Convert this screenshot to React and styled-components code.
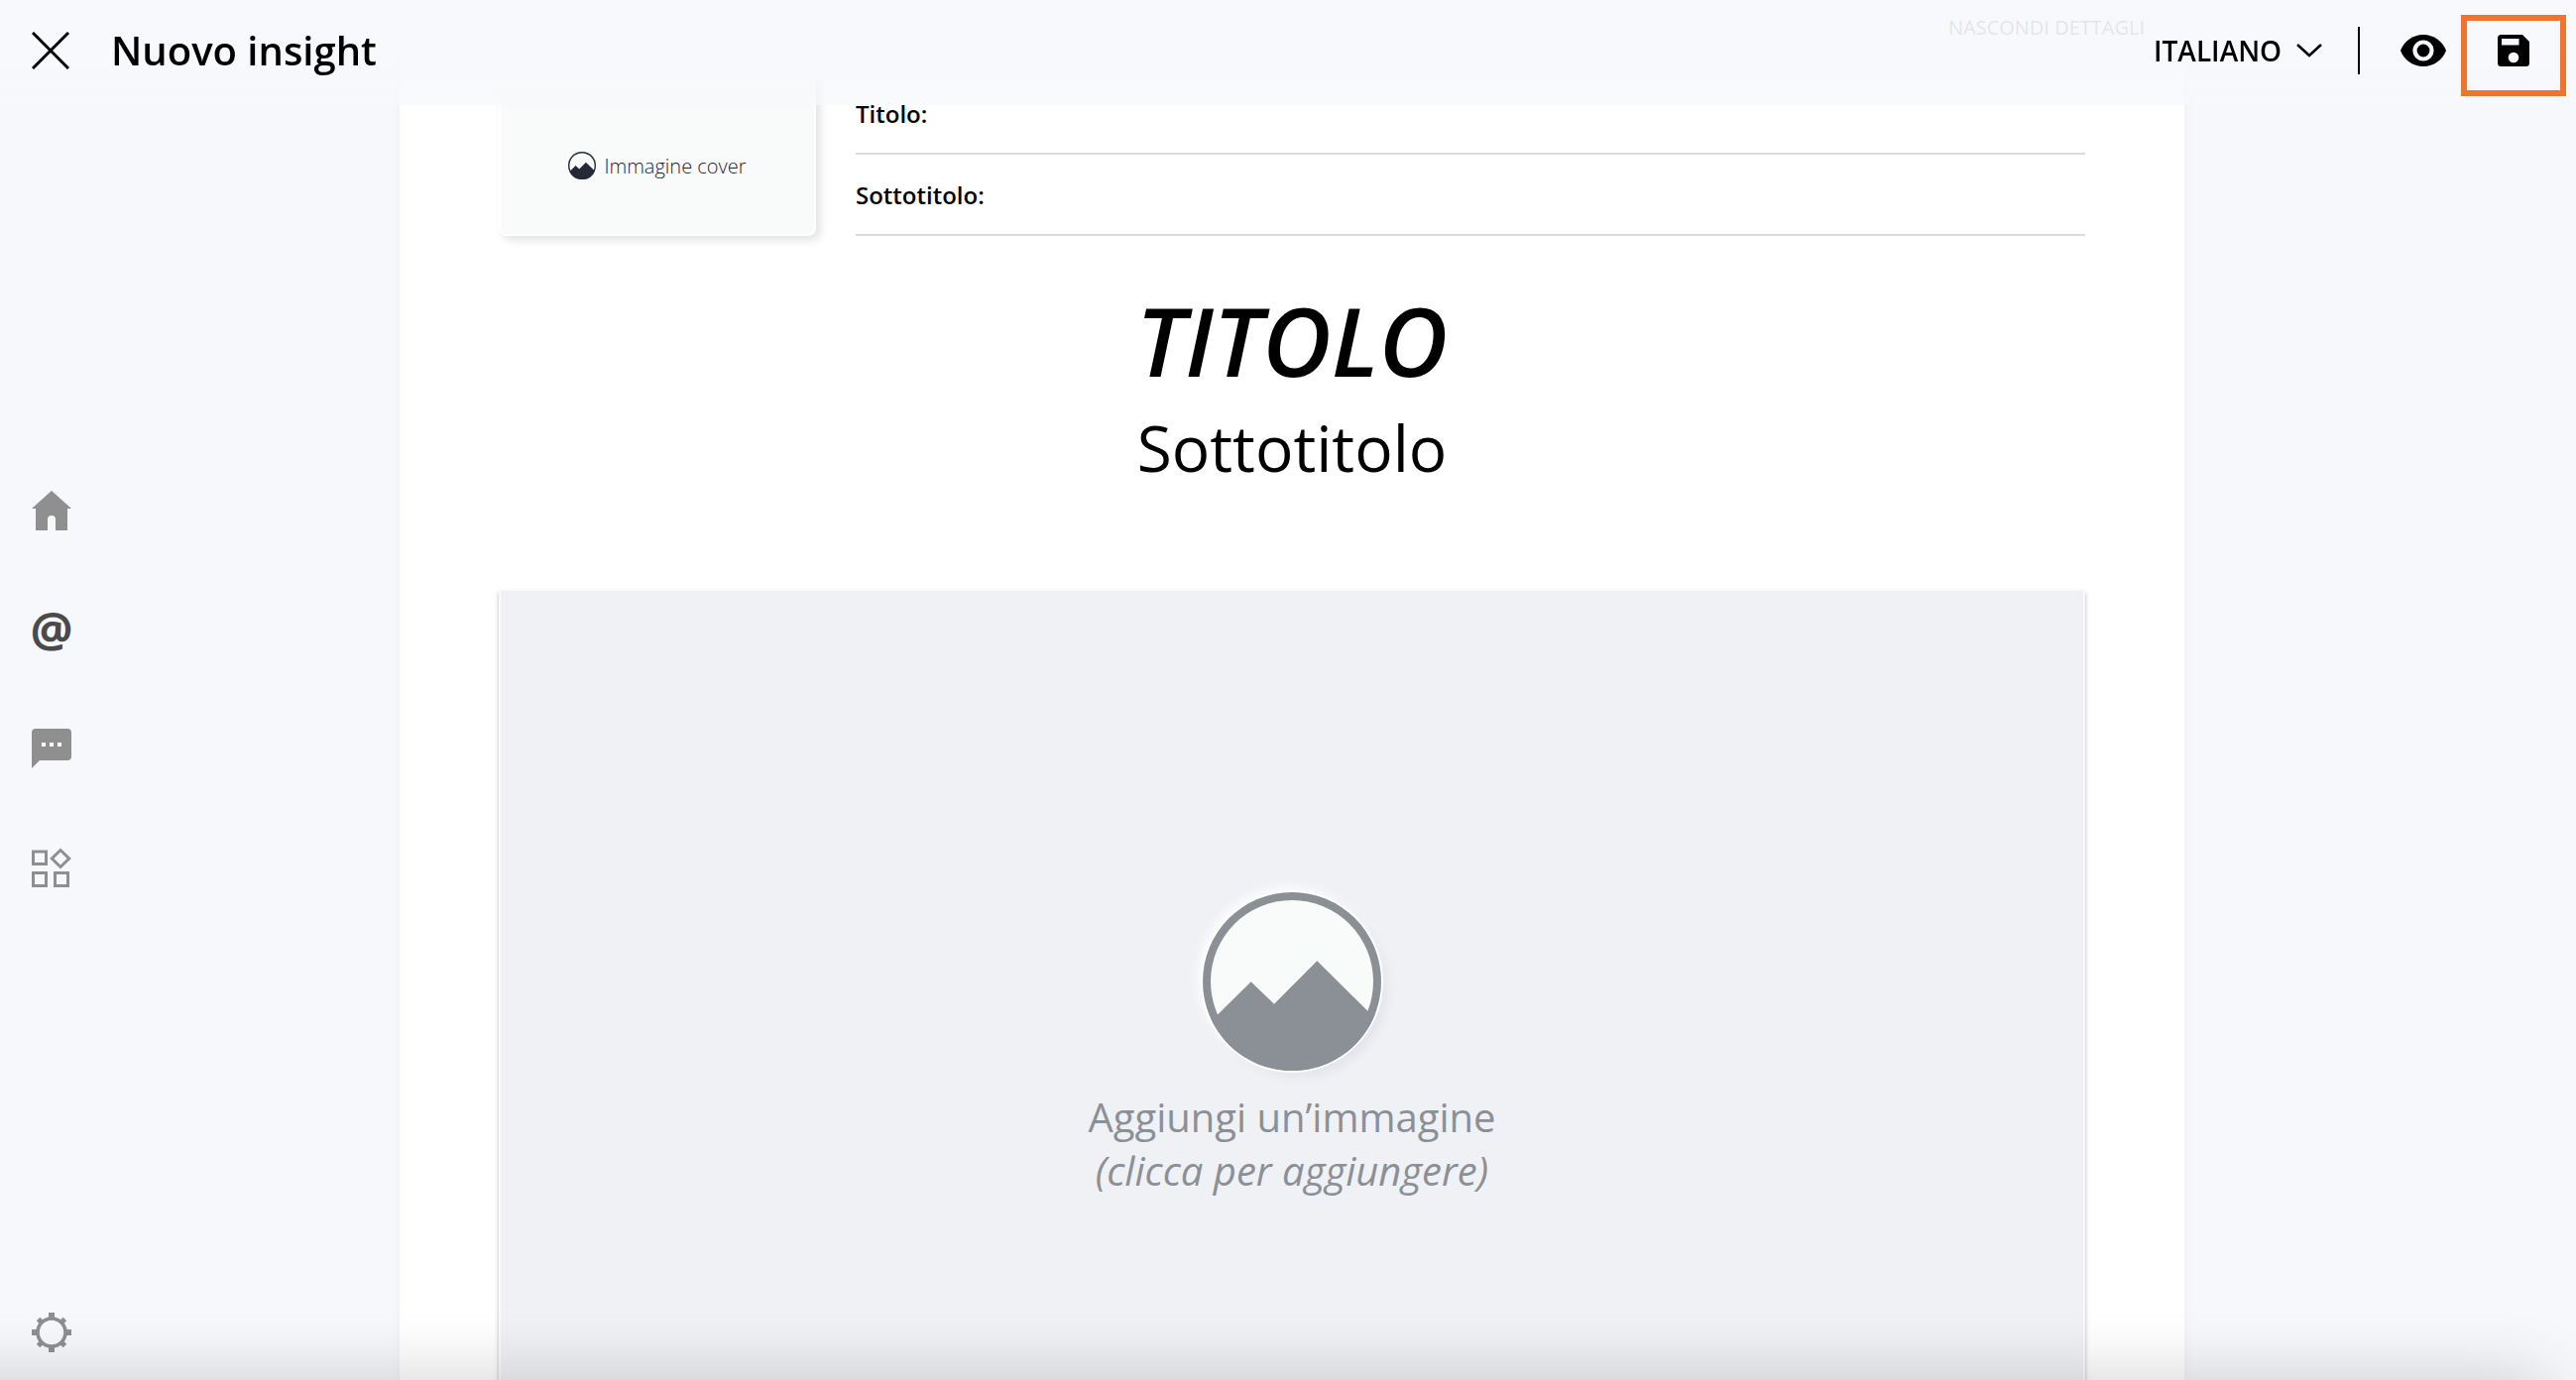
import React from 'react';
import styled, { createGlobalStyle } from 'styled-components';

const GlobalStyle = createGlobalStyle`
  * {
    box-sizing: border-box;
  }

  body {
    background: #F7F8FC;
    color: #000;
    font-family: 'Open Sans', 'Noto Sans', sans-serif;
    margin: 0;
  }

  button,
  input,
  select {
    background: none;
    border: 0;
    color: inherit;
    font: inherit;
    margin: 0;
    padding: 0;
  }

  button {
    cursor: pointer;
  }

  svg {
    display: block;
    flex-shrink: 0;
  }
`;

const Page = styled.div`
  display: grid;
  grid-template-columns: 1fr minmax(0, 1800px) 1fr;
  height: 100vh;
  overflow: hidden;
  padding-left: 8px;
`;

const Header = styled.header`
  align-items: center;
  background: linear-gradient(rgba(247, 248, 251, 0.92), rgba(247, 248, 251, 0.92) 50%, rgba(247, 248, 251, 0.75));
  display: flex;
  height: 106px;
  left: 0;
  padding: 0 10px 4px 32px;
  position: fixed;
  right: 0;
  top: 0;
  z-index: 2;
`;

const PageTitle = styled.h1`
  flex: 1;
  font-size: 40px;
  font-weight: 600;
  line-height: 56px;
  margin: 0 0 0 40px;
`;

const IconButton = styled.button`
  align-items: center;
  display: flex;
  height: 40px;
  justify-content: center;
  width: 40px;
`;

const CloseButton = styled(IconButton)`
  justify-content: flex-start;
`;

const Language = styled.label`
  align-items: center;
  display: flex;
  gap: 14px;
`;

const LanguageSelect = styled.select`
  appearance: none;
  font-size: 28px;
  font-weight: 600;
  line-height: 40px;
`;

const Divider = styled.span`
  background: #000;
  height: 48px;
  margin: 0 44px 0 36px;
  width: 2px;
`;

const SaveButton = styled.button`
  align-items: center;
  border: 6px solid #EF742F;
  display: flex;
  height: 82px;
  justify-content: center;
  margin: 10px 0 0 18px;
  padding-bottom: 10px;
  width: 106px;
`;

const Sidebar = styled.aside`
  color: #8F8F90;
  display: grid;
  grid-template-rows: 1fr auto 1fr;
  height: 100vh;
  justify-items: start;
  padding: 26px 24px 28px;
`;

const Nav = styled.nav`
  display: grid;
  gap: 80px;
  grid-row: 2;
`;

const NavLink = styled.a`
  align-items: center;
  color: ${({ $active }) => ($active ? '#4A4A4A' : 'inherit')};
  display: flex;
  font-size: 48px;
  font-weight: 700;
  height: 40px;
  justify-content: center;
  line-height: 40px;
  text-decoration: none;
  width: 40px;
`;

const SettingsLink = styled(NavLink)`
  align-self: end;
  grid-row: 3;
`;

const Paper = styled.main`
  background: #FFF;
  box-shadow: 0 0 12px rgba(0, 0, 0, 0.04);
  display: flex;
  flex-direction: column;
  padding: 0 100px;
`;

const DetailsToggle = styled.button`
  align-self: flex-end;
  font-size: 20px;
  line-height: 56px;
  margin: 0 -60px 18px 0;
`;

const Details = styled.section`
  display: flex;
  gap: 40px;
`;

const Cover = styled.button`
  align-items: center;
  background: #F9FBFA;
  border: 2px solid #FFF;
  border-radius: 8px;
  box-shadow: 4px 4px 10px rgba(0, 0, 30, 0.12);
  color: #252836;
  display: flex;
  font-size: 20px;
  font-weight: 300;
  gap: 8px;
  justify-content: center;
  padding-top: 22px;
  width: 320px;
`;

const Fields = styled.div`
  flex: 1;
`;

const Field = styled.label`
  align-items: center;
  border-bottom: 2px solid #DCDCDC;
  display: flex;
  font-size: 24px;
  font-weight: 600;
  gap: 12px;
  height: 82px;
`;

const FieldInput = styled.input`
  flex: 1;
  font-weight: 400;
  outline: none;
`;

const Title = styled.h2`
  font-size: 96px;
  font-style: italic;
  font-weight: 600;
  line-height: 130px;
  margin: 40px 0 0;
  text-align: center;
`;

const Subtitle = styled.p`
  font-size: 64px;
  line-height: 88px;
  margin: 0 0 98px;
  text-align: center;
`;

const ImageDrop = styled.button`
  align-items: center;
  background: #F0F1F5;
  border: 2px solid #FAFAF9;
  box-shadow: 0 4px 4px rgba(0, 0, 0, 0.3);
  color: #8B9096;
  display: flex;
  flex-direction: column;
  flex-shrink: 0;
  font-size: 40px;
  gap: 20px;
  height: 900px;
  line-height: 54px;
  padding-top: 304px;
`;

const RoundImage = styled.span`
  border-radius: 50%;
  box-shadow:
    0 0 0 2px #FFF,
    -4px -4px 12px #FFF,
    6px 6px 12px rgba(0, 0, 30, 0.06);
`;

const BottomShade = styled.div`
  bottom: -60px;
  box-shadow: 0 0 70px rgba(0, 0, 0, 0.2);
  height: 60px;
  left: -80px;
  pointer-events: none;
  position: fixed;
  right: 30px;
`;

const CloseIcon = () => (
  <svg width="38" height="38" viewBox="0 0 38 38" stroke="currentColor" strokeWidth="3">
    <path d="M1 1l36 36M37 1L1 37" />
  </svg>
);

const ChevronIcon = () => (
  <svg width="26" height="14" viewBox="0 0 26 14" fill="none" stroke="currentColor" strokeWidth="2.6">
    <path d="M1 1l12 11L25 1" />
  </svg>
);

const EyeIcon = () => (
  <svg width="46" height="32" viewBox="0 0 46 32">
    <path d="M23 0C12.500 0 3.600 6.600 0 16c3.600 9.400 12.500 16 23 16s19.400-6.600 23-16C42.400 6.600 33.500 0 23 0z" />
    <circle cx="23" cy="16" r="8.500" fill="none" stroke="#F7F8FB" strokeWidth="4.200" />
  </svg>
);

const SaveIcon = () => (
  <svg width="32" height="32" viewBox="0 0 32 32">
    <path d="M3.500 0H25l7 7v21.500a3.500 3.500 0 0 1-3.500 3.500h-25A3.500 3.500 0 0 1 0 28.500v-25A3.500 3.500 0 0 1 3.500 0z" />
    <path d="M4 4h17.500v6.500H4z" fill="#F7F8FB" />
    <circle cx="16" cy="23" r="5.300" fill="#F7F8FB" />
  </svg>
);

const HomeIcon = () => (
  <svg width="40" height="40" viewBox="0 0 40 40" fill="currentColor">
    <path d="M20 0l20 18h-4v22H24V29a4 4 0 0 0-8 0v11H4V18H0z" />
  </svg>
);

const ChatIcon = () => (
  <svg width="40" height="40" viewBox="0 0 40 40" fill="currentColor">
    <path d="M4 0h32a4 4 0 0 1 4 4v24a4 4 0 0 1-4 4H8l-8 8V4a4 4 0 0 1 4-4z" />
    <path d="M10 14h4v4h-4zM18 14h4v4h-4zM26 14h4v4h-4z" fill="#FFF" />
  </svg>
);

const WidgetsIcon = () => (
  <svg width="40" height="40" viewBox="0 0 40 40" fill="none" stroke="currentColor" strokeWidth="3">
    <path d="M1.500 4h13v12.500h-13zM1.500 25.500h13v13h-13zM23.500 25.500h13v13h-13zM29 2.500l8.700 8.500-8.700 8.500-8.700-8.500z" />
  </svg>
);

const GearIcon = () => (
  <svg width="40" height="40" viewBox="0 0 40 40" fill="currentColor">
    <circle cx="20" cy="20" r="14" fill="none" stroke="currentColor" strokeWidth="3.600" />
    {[0, 90, 180, 270].map((angle) => (
      <g key={angle} transform={`rotate(${angle} 20 20)`}>
        <path d="M17 0h6v6h-6z" />
        <path d="M17.500 1h5v5h-5z" transform="rotate(45 20 20)" />
      </g>
    ))}
  </svg>
);

const MountainsIcon = ({ size, ring, sky }) => (
  <svg width={size} height={size} viewBox="0 0 180 180" fill="currentColor">
    <circle cx="90" cy="90" r="90" />
    <circle cx="90" cy="90" r={90 - ring} fill={sky} />
    <path d="M14.500 124L48.700 90.300 72 112.700l43.300-43.400 51 50.400 7.500 3.500A90 90 0 0 1 8 127z" />
  </svg>
);

const NAV_ITEMS = [
  { label: 'Home', icon: <HomeIcon /> },
  { label: 'Menzioni', icon: '@', active: true },
  { label: 'Messaggi', icon: <ChatIcon /> },
  { label: 'Widget', icon: <WidgetsIcon /> },
];

const App = () => (
  <>
    <GlobalStyle />
    <Header>
      <CloseButton aria-label="Chiudi">
        <CloseIcon />
      </CloseButton>
      <PageTitle>Nuovo insight</PageTitle>
      <Language>
        <LanguageSelect aria-label="Lingua">
          <option>ITALIANO</option>
        </LanguageSelect>
        <ChevronIcon />
      </Language>
      <Divider />
      <IconButton aria-label="Anteprima">
        <EyeIcon />
      </IconButton>
      <SaveButton aria-label="Salva">
        <SaveIcon />
      </SaveButton>
    </Header>
    <Page>
      <Sidebar>
        <Nav>
          {NAV_ITEMS.map(({ label, icon, active }) => (
            <NavLink key={label} href="#" aria-label={label} $active={active}>
              {icon}
            </NavLink>
          ))}
        </Nav>
        <SettingsLink href="#" aria-label="Impostazioni">
          <GearIcon />
        </SettingsLink>
      </Sidebar>
      <Paper>
        <DetailsToggle>NASCONDI DETTAGLI</DetailsToggle>
        <Details>
          <Cover>
            <MountainsIcon size={28} ring={9} sky="#F9FBFA" />
            Immagine cover
          </Cover>
          <Fields>
            <Field>
              Titolo:
              <FieldInput />
            </Field>
            <Field>
              Sottotitolo:
              <FieldInput />
            </Field>
          </Fields>
        </Details>
        <Title>TITOLO</Title>
        <Subtitle>Sottotitolo</Subtitle>
        <ImageDrop>
          <RoundImage>
            <MountainsIcon size={180} ring={8} sky="#F9FBFB" />
          </RoundImage>
          <span>
            Aggiungi un’immagine
            <br />
            <em>(clicca per aggiungere)</em>
          </span>
        </ImageDrop>
      </Paper>
    </Page>
    <BottomShade />
  </>
);

export default App;
